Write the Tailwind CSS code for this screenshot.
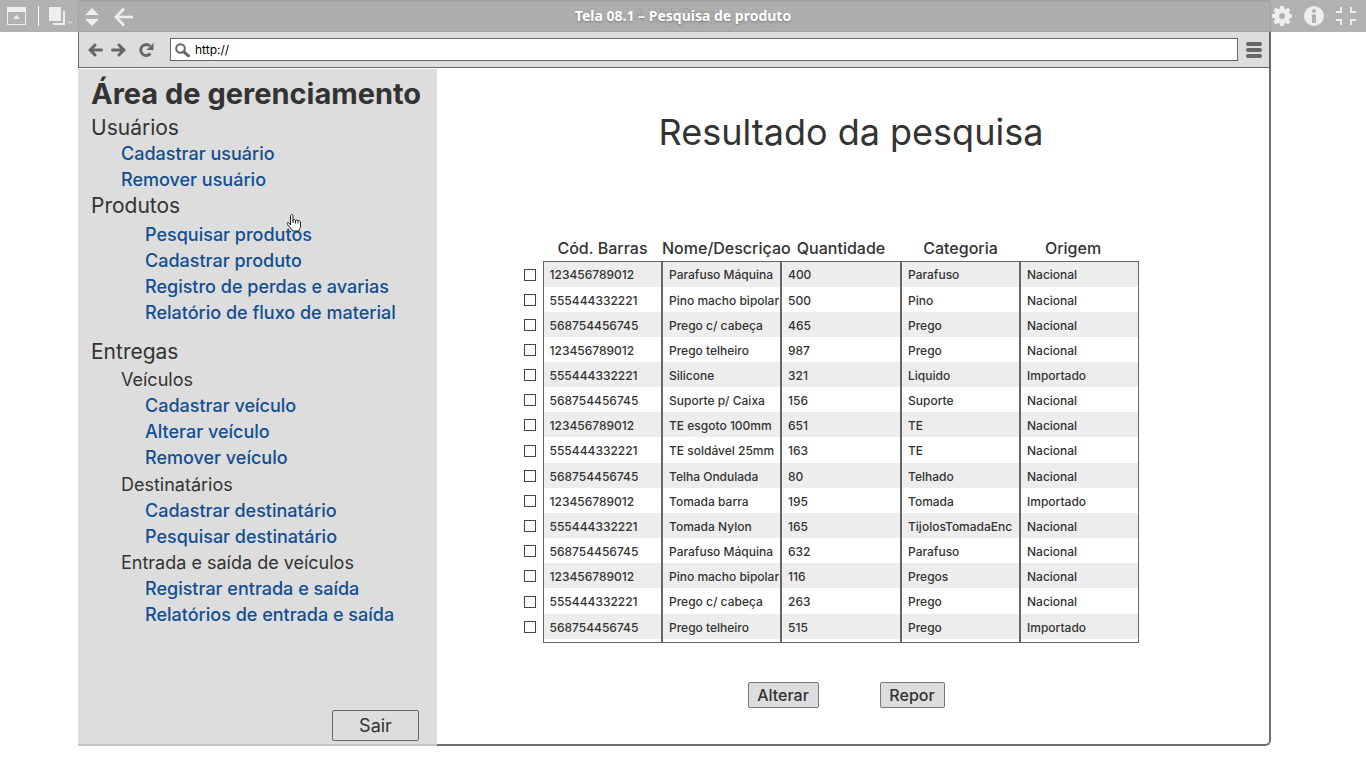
<!DOCTYPE html>
<html lang="pt-BR">
<head>
<meta charset="utf-8">
<title>Tela 08.1 – Pesquisa de produto</title>
<script src="https://cdn.jsdelivr.net/npm/@tailwindcss/browser@4"></script>
</head>
<body class="flex min-h-screen flex-col bg-white font-['Inter','Liberation_Sans',sans-serif] text-[#333]">

<header class="relative flex h-8 shrink-0 bg-[#b1b1b1] text-[#eee]">
  <div class="flex w-[78px] items-center pl-[7px]">
    <button aria-label="Mostrar barra"><svg class="block" width="20" height="18" viewBox="0 0 20 18"><path d="M.5.5h18v17H.5z" fill="none" stroke="currentColor"/><path d="M0 0h19v5H0zM6 12l3.500-4 3.500 4z" fill="currentColor"/></svg></button>
    <span class="ml-[11px] h-5 w-px bg-white"></span>
    <button class="ml-[10px]" aria-label="Páginas"><svg class="block" width="25" height="20" viewBox="0 0 25 20"><path d="M0 1h12v14H0z" fill="currentColor"/><path d="M14 5h2v14H4v-2h10z" fill="currentColor"/><path d="M18.500 15l2.500 2.500 2.500-2.500" fill="none" stroke="currentColor"/></svg></button>
  </div>
  <div class="flex flex-1 items-center rounded-t border-t-2 border-b border-l border-r border-[#a1a1a1] bg-[#aeaeae] pl-[6px]">
    <button aria-label="Expandir"><svg class="block" width="14" height="18" viewBox="0 0 14 18"><path d="M0 7l7-7 7 7zM0 11h14l-7 7z" fill="currentColor"/></svg></button>
    <button class="ml-[15px]" aria-label="Voltar"><svg class="block" width="20" height="20" viewBox="0 0 20 20"><path d="M10 1.500L2 10l8 8.500M2 10h17" fill="none" stroke="currentColor" stroke-width="2.600"/></svg></button>
  </div>
  <div class="flex w-[95px] items-center justify-between pl-px pr-[10px]">
    <button aria-label="Configurações"><svg class="block" width="20" height="20" viewBox="0 0 20 20"><path fill-rule="evenodd" fill="currentColor" d="M8.300 0h3.400l.6 2.600 1.500.6 2.300-1.400 2.300 2.300L17 6.300l.6 1.500 2.400.6v3.300l-2.400.6-.6 1.500 1.400 2.200-2.300 2.300-2.300-1.400-1.500.6-.6 2.500H8.300l-.6-2.500-1.500-.6-2.300 1.400L1.600 16 3 13.800l-.6-1.500L0 11.700V8.400l2.400-.6L3 6.300 1.600 4.100l2.300-2.300 2.300 1.400 1.500-.6zM10 7a3 3 0 100 6 3 3 0 000-6z"/></svg></button>
    <button aria-label="Informações"><svg class="block" width="20" height="20" viewBox="0 0 20 20"><circle cx="10" cy="10" r="10" fill="currentColor"/><circle cx="10" cy="5" r="2" fill="#b1b1b1"/><path d="M7.500 8.500H12V17H8V10H7.500z" fill="#b1b1b1"/></svg></button>
    <button aria-label="Sair da tela cheia"><svg class="block" width="20" height="18" viewBox="0 0 20 18" fill="none" stroke="currentColor" stroke-width="2"><path d="M0 5h5V0M20 5h-5V0M0 13h5v5M20 13h-5v5"/></svg></button>
  </div>
  <span class="pointer-events-none absolute inset-x-0 top-[6px] pr-4 text-center text-sm leading-4 text-[#a2a2a2]">A Web Page</span>
  <h1 class="pointer-events-none absolute inset-x-0 top-0 text-center font-['Noto_Sans',sans-serif] text-sm leading-8 font-bold text-white text-shadow-md">Tela 08.1 – Pesquisa de produto</h1>
</header>

<div class="mr-[95px] mb-[22px] ml-[78px] flex flex-1 flex-col">
  <nav class="flex h-9 shrink-0 items-center border-r-2 border-b border-l border-[#666] bg-[#ddd] pr-[7px] pl-[9px] text-[#666]" aria-label="Navegador">
    <button aria-label="Página anterior"><svg class="block" width="15" height="14" viewBox="0 0 15 14" fill="none" stroke="currentColor" stroke-width="3" stroke-linecap="round"><path d="M7 2L2 7l5 5M3 7h10.500"/></svg></button>
    <button class="ml-2" aria-label="Próxima página"><svg class="block" width="15" height="14" viewBox="0 0 15 14" fill="none" stroke="currentColor" stroke-width="3" stroke-linecap="round"><path d="M8 2l5 5-5 5M12 7H1.500"/></svg></button>
    <button class="ml-3" aria-label="Recarregar"><svg class="block" width="16" height="14" viewBox="0 0 16 14"><path d="M12.500 10.500A5.500 5.500 0 1112 3" fill="none" stroke="currentColor" stroke-width="2.800"/><path d="M15.500 0v7H8.500z" fill="currentColor"/></svg></button>
    <div class="ml-4 flex h-[23px] flex-1 items-center border border-[#666] bg-white pl-1">
      <svg width="15" height="14" viewBox="0 0 15 14" fill="none" stroke="currentColor"><circle cx="5.500" cy="5.500" r="4.300" stroke-width="2"/><path d="M9 9l4.500 3.800" stroke-width="3" stroke-linecap="round"/></svg>
      <input class="ml-[5px] min-w-0 flex-1 text-xs text-black outline-none" type="text" value="http://" aria-label="Endereço">
    </div>
    <button class="ml-2" aria-label="Menu"><svg class="block" width="16" height="16" viewBox="0 0 16 16" stroke="currentColor" stroke-width="4" stroke-linecap="round"><path d="M2 2h12M2 8h12M2 14h12"/></svg></button>
  </nav>

  <div class="flex flex-1">
    <aside class="relative mt-px flex w-[359px] shrink-0 flex-col border-b-2 border-[#c4c4c4] bg-[#ddd] px-[13px] pt-2 text-[18px] leading-[26px]">
      <h2 class="text-[29px] leading-[34px] font-bold whitespace-nowrap">Área de gerenciamento</h2>
      <h3 class="mt-1 text-[21px]">Usuários</h3>
      <ul class="pl-[30px] font-medium text-[#124e92]">
        <li><a href="#">Cadastrar usuário</a></li>
        <li><a href="#">Remover usuário</a></li>
      </ul>
      <h3 class="text-[21px]">Produtos</h3>
      <ul class="mt-[3px] pl-[54px] font-medium text-[#124e92]">
        <li><a href="#">Pesquisar produtos</a></li>
        <li><a href="#">Cadastrar produto</a></li>
        <li><a href="#">Registro de perdas e avarias</a></li>
        <li><a href="#">Relatório de fluxo de material</a></li>
      </ul>
      <h3 class="mt-[13px] text-[21px]">Entregas</h3>
      <h4 class="mt-[2px] pl-[30px]">Veículos</h4>
      <ul class="pl-[54px] font-medium text-[#124e92]">
        <li><a href="#">Cadastrar veículo</a></li>
        <li><a href="#">Alterar veículo</a></li>
        <li><a href="#">Remover veículo</a></li>
      </ul>
      <h4 class="mt-px pl-[30px]">Destinatários</h4>
      <ul class="pl-[54px] font-medium text-[#124e92]">
        <li><a href="#">Cadastrar destinatário</a></li>
        <li><a href="#">Pesquisar destinatário</a></li>
      </ul>
      <h4 class="pl-[30px]">Entrada e saída de veículos</h4>
      <ul class="pl-[54px] font-medium text-[#124e92]">
        <li><a href="#">Registrar entrada e saída</a></li>
        <li><a href="#">Relatórios de entrada e saída</a></li>
      </ul>
      <button class="mt-auto mr-[5px] mb-[3px] h-[31px] w-[87px] self-end rounded-xs border border-[#666]">Sair</button>
      <svg class="pointer-events-none absolute top-[145px] left-[208px]" width="16" height="18" viewBox="0 0 16 18"><path d="M4.500 11V2c0-2 2.500-2 2.500 0v4.500c0-1.300 2.500-1.300 2.500.3 0-1.200 2.500-1.200 2.500.5 0-1.200 2.500-1 2.500.7v4c0 2-1 3-1.500 5H6.500C5.500 14.500 3.500 13.500 1.500 10.500.5 8.800 2 8 3 9z" fill="#fff" stroke="#222"/><path d="M7 6v3M9.500 7v2.500M12 7.500v2" stroke="#222"/></svg>
    </aside>

    <main class="flex-1 rounded-br-md border-r-2 border-b-2 border-[#707070] pb-6">
      <h2 class="mt-10 pr-1 text-center text-4xl leading-[48px]">Resultado da pesquisa</h2>
      <table class="mt-[79px] ml-20 table-fixed border-collapse text-left text-[12px] leading-4 font-medium">
        <colgroup><col class="w-[26px]"><col class="w-[119px]"><col class="w-[119px]"><col class="w-[120px]"><col class="w-[119px]"><col class="w-[118px]"></colgroup>
        <thead>
          <tr class="h-[26px] text-center text-base leading-5 whitespace-nowrap">
            <th class="p-0" aria-label="Selecionar"></th>
            <th class="p-0 font-medium" scope="col">Cód. Barras</th>
            <th class="max-w-[119px] p-0 text-left font-medium" scope="col">Nome/Descriçao</th>
            <th class="p-0 font-medium" scope="col">Quantidade</th>
            <th class="p-0 font-medium" scope="col">Categoria</th>
            <th class="p-0 pr-3 font-medium" scope="col">Origem</th>
          </tr>
        </thead>
        <tbody id="rows"></tbody>
      </table>
      <div class="mt-[39px] flex justify-center gap-[61px] pr-[14px] text-base font-medium">
        <button class="h-[26px] w-[71px] rounded-xs border border-[#777] bg-[#ddd] leading-5">Alterar</button>
        <button class="h-[26px] w-[65px] rounded-xs border border-[#777] bg-[#ddd] leading-5">Repor</button>
      </div>
    </main>
  </div>
</div>

<script>
const products = [
  ['123456789012', 'Parafuso Máquina', '400', 'Parafuso', 'Nacional'],
  ['555444332221', 'Pino macho bipolar', '500', 'Pino', 'Nacional'],
  ['568754456745', 'Prego c/ cabeça', '465', 'Prego', 'Nacional'],
  ['123456789012', 'Prego telheiro', '987', 'Prego', 'Nacional'],
  ['555444332221', 'Silicone', '321', 'Liquido', 'Importado'],
  ['568754456745', 'Suporte p/ Caixa', '156', 'Suporte', 'Nacional'],
  ['123456789012', 'TE esgoto 100mm', '651', 'TE', 'Nacional'],
  ['555444332221', 'TE soldável 25mm', '163', 'TE', 'Nacional'],
  ['568754456745', 'Telha Ondulada', '80', 'Telhado', 'Nacional'],
  ['123456789012', 'Tomada barra', '195', 'Tomada', 'Importado'],
  ['555444332221', 'Tomada Nylon', '165', 'TijolosTomadaEnc', 'Nacional'],
  ['568754456745', 'Parafuso Máquina', '632', 'Parafuso', 'Nacional'],
  ['123456789012', 'Pino macho bipolar', '116', 'Pregos', 'Nacional'],
  ['555444332221', 'Prego c/ cabeça', '263', 'Prego', 'Nacional'],
  ['568754456745', 'Prego telheiro', '515', 'Prego', 'Importado'],
];
const tallRows = [0, 7, 13];
document.getElementById('rows').innerHTML = products.map((p, i) => {
  const height = tallRows.includes(i) ? 'h-[26px]' : 'h-[25px]';
  const shade = i % 2 === 0 ? 'bg-[#ededed]' : 'bg-white';
  const edge = i === 0 ? 'border-t' : '';
  const cells = p.map((t, c) => {
    const side = c === 0 ? 'border-l border-r-2' : c === 4 ? 'border-l-2 border-r' : 'border-x-2';
    return `<td class="${side} ${edge} border-[#666] p-0 pt-[2px] pl-[6px] whitespace-nowrap ${shade}">${t}</td>`;
  }).join('');
  return `<tr class="${height}"><td class="p-0 pt-px pl-[7px]"><input type="checkbox" aria-label="Selecionar ${p[1]}" class="block size-3 appearance-none border border-[#444] bg-white checked:bg-[#444]"></td>${cells}</tr>`;
}).join('') + '<tr class="h-[3px]"><td class="p-0"></td><td class="border-r-2 border-b border-l border-[#666] p-0"></td><td class="border-x-2 border-b border-[#666] p-0"></td><td class="border-x-2 border-b border-[#666] p-0"></td><td class="border-x-2 border-b border-[#666] p-0"></td><td class="border-r border-b border-l-2 border-[#666] p-0"></td></tr>';
</script>
</body>
</html>
